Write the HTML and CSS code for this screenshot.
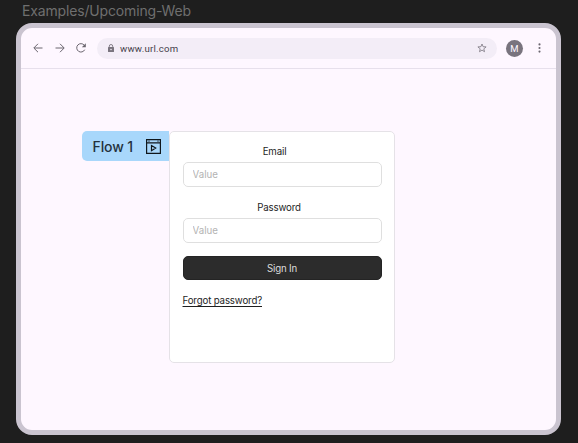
FILE: index.html
```html
<!DOCTYPE html>
<html lang="en">
<head>
<meta charset="utf-8">
<title>Examples/Upcoming-Web</title>
<link rel="stylesheet" href="styles.css">
</head>
<body>
<div class="frame-label">Examples/Upcoming-Web</div>
<main class="browser">
  <header class="toolbar">
    <nav class="nav">
      <svg viewBox="0 0 10 10" width="10" height="10"><path d="M9.5 5H1M5 .8.8 5 5 9.2"/></svg>
      <svg viewBox="0 0 10 10" width="10" height="10"><path d="M.5 5H9M5 .8 9.2 5 5 9.2"/></svg>
      <svg viewBox="0 0 10 10" width="10" height="10"><path d="M8.7 6.7A4.2 4.2 0 1 1 8.2 2.2L9 3.1"/><path class="solid" d="M9.8.3V4.3H5.8Z"/></svg>
    </nav>
    <div class="address">
      <svg class="lock" viewBox="0 0 6 8" width="6" height="8"><path class="shackle" d="M1.3 3.2V2.2a1.7 1.7 0 0 1 3.4 0v1"/><path class="body" fill-rule="evenodd" d="M.6 3h4.8q.6 0 .6.6v3.8q0 .6-.6.6H.6Q0 8 0 7.400V3.600Q0 3 .6 3ZM3 4.700a.8.8 0 1 0 0 1.600a.8.8 0 1 0 0-1.600Z"/></svg>
      <span class="url">www.url.com</span>
      <svg class="star" viewBox="0 0 10 10" width="10" height="10"><path d="M5 1 6.100 3.700 9.100 3.900 6.800 5.800 7.500 8.700 5 7.100 2.500 8.700 3.200 5.800.9 3.900 3.900 3.700Z"/></svg>
    </div>
    <div class="avatar">M</div>
    <svg class="more" viewBox="0 0 3 10" width="3" height="10"><circle cx="1.5" cy="1.400" r="1.050"/><circle cx="1.5" cy="5" r="1.050"/><circle cx="1.5" cy="8.600" r="1.050"/></svg>
  </header>
  <section class="content">
    <div class="flow">Flow 1
      <svg viewBox="0 0 15 15" width="15" height="15"><path d="M.6.6H14.400V14.400H.6ZM.6 3.800H14.400M5.500 6.500V11.700L9.700 9.100Z"/><path d="M2.500 2.200h1M11.500 2.200h1"/></svg>
    </div>
    <form class="card">
      <label class="label first" for="email">Email</label>
      <input class="field" id="email" type="text" placeholder="Value">
      <label class="label second" for="password">Password</label>
      <input class="field" id="password" type="password" placeholder="Value">
      <button class="submit" type="button">Sign In</button>
      <a class="forgot" href="#">Forgot password?</a>
    </form>
  </section>
</main>
</body>
</html>
```
FILE: styles.css
```css
* { box-sizing: border-box; }
body {
  margin: 0;
  width: 578px;
  height: 443px;
  overflow: hidden;
  background: #1e1e1e;
  font-family: Inter, "Liberation Sans", sans-serif;
}
svg { display: block; flex: none; }
.frame-label {
  height: 23px;
  padding: 2px 0 0 22px;
  color: #6f6f6f;
  font-size: 14px;
  line-height: 17px;
  letter-spacing: -0.16px;
}
.browser {
  width: 545px;
  height: 411.5px;
  margin-left: 16px;
  border: 5px solid #cac4d0;
  border-radius: 16px;
  background: #fef7ff;
  overflow: hidden;
}
.toolbar {
  display: flex;
  align-items: center;
  height: 41px;
  padding: 0 14px 0 12px;
  border-bottom: 1px solid #e7e0ec;
}
.nav {
  display: flex;
  gap: 11.5px;
  fill: none;
  stroke: #6b666f;
  stroke-width: 1;
}
.nav .solid { fill: #6b666f; stroke: none; }
.address {
  display: flex;
  align-items: center;
  width: 400px;
  height: 21px;
  margin-left: 11px;
  padding: 0 10.5px 0 11px;
  border-radius: 11px;
  background: #f3edf7;
}
.lock .body { fill: #79747e; }
.lock .shackle { fill: none; stroke: #79747e; stroke-width: .9; }
.url {
  flex: 1;
  margin-left: 6px;
  color: #45414a;
  font-family: Roboto, sans-serif;
  font-size: 9.6px;
  letter-spacing: 0.22px;
}
.star { fill: none; stroke: #79747e; stroke-width: .8; }
.avatar {
  width: 17px;
  height: 17px;
  margin-left: 9px;
  border-radius: 50%;
  background: #79747e;
  color: #fef7ff;
  font: 400 9.5px/17px Roboto, sans-serif;
  text-align: center;
}
.more { margin-left: 15px; fill: #6b666f; }
.content {
  display: flex;
  align-items: flex-start;
  padding: 62px 0 0 61px;
}
.flow {
  display: flex;
  align-items: center;
  justify-content: space-between;
  width: 87px;
  height: 30px;
  padding: 0 8px 0 10.5px;
  border-radius: 5px 0 0 5px;
  background: #a8d7fb;
  color: #24323d;
  font-size: 14px;
  font-weight: 500;
  letter-spacing: -0.1px;
  white-space: nowrap;
}
.flow svg { fill: none; stroke: #10171c; stroke-width: 1.2; }
.card {
  display: flex;
  flex-direction: column;
  width: 226px;
  height: 231.5px;
  padding: 13px 12.5px;
  border: 1px solid #e5e2e7;
  border-radius: 5px;
  background: #fff;
  color: #1e1e1e;
  font-size: 9.7px;
  letter-spacing: -0.15px;
}
.label { height: 17px; line-height: 14px; text-align: center; }
.first { padding-right: 15px; }
.second { margin-top: 14.5px; padding-right: 6px; }
.field {
  width: 199px;
  height: 24.5px;
  padding: 0 9px;
  border: 1px solid #dfdfdf;
  border-radius: 5px;
  background: #fff;
  font: inherit;
  letter-spacing: 0;
  outline: 0;
}
.field::placeholder { color: #b3b3b3; opacity: 1; }
.submit {
  width: 199px;
  height: 24px;
  margin-top: 13.5px;
  padding: 0;
  border: 1px solid #242424;
  border-radius: 5px;
  background: #2c2c2c;
  color: #dcdcdc;
  font: inherit;
  letter-spacing: -0.15px;
}
.forgot {
  align-self: flex-start;
  margin-top: 14px;
  color: #1e1e1e;
  line-height: 14px;
  text-underline-offset: 2px;
}
```
